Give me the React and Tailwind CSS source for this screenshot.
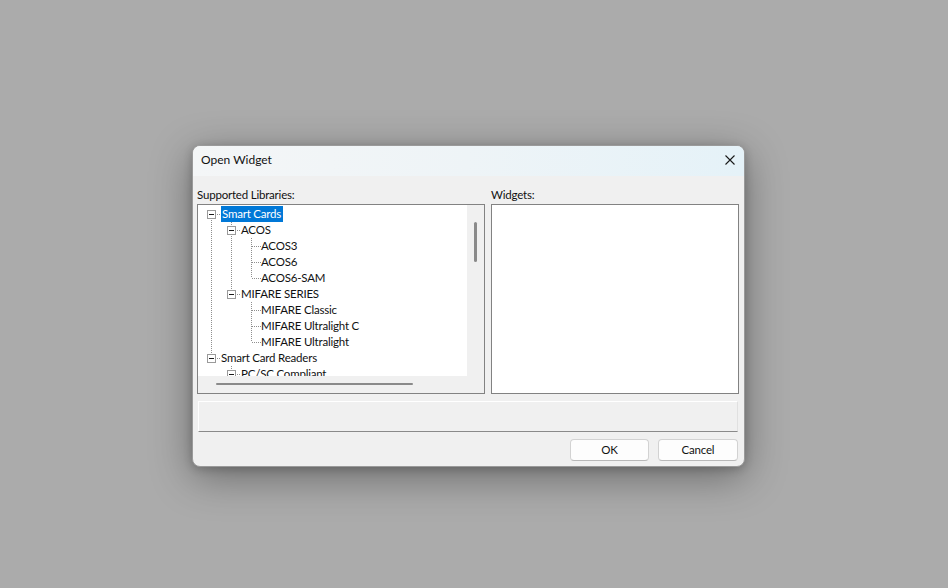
import React from "react";

const FONT = { fontFamily: 'Lato, "Noto Sans", sans-serif' };

function Cell({ type }) {
  const dot = { stroke: "#8f8f8f", strokeWidth: 1, strokeDasharray: "1 1", shapeRendering: "crispEdges" };
  if (type === "blank") return <div className="w-[20px] h-[16px] shrink-0" />;
  if (type === "guide")
    return (
      <svg width="20" height="16" className="shrink-0 block">
        <line x1="10.5" y1="0" x2="10.5" y2="16" style={dot} />
      </svg>
    );
  const { first, last, box } = type;
  return (
    <svg width="20" height="16" className="shrink-0 block">
      {!first && <line x1="10.5" y1="0" x2="10.5" y2={box ? 4 : 8} style={dot} />}
      {!last && <line x1="10.5" y1={box ? 14 : 8} x2="10.5" y2="16" style={dot} />}
      <line x1={box ? 16 : 11} y1="8.5" x2="20" y2="8.5" style={dot} />
      {box && (
        <g shapeRendering="crispEdges">
          <rect x="6.5" y="4.5" width="8" height="8" fill="#fff" stroke="#9a9a9a" />
          <line x1="8" y1="8.5" x2="13" y2="8.5" stroke="#1a1a1a" />
        </g>
      )}
    </svg>
  );
}

const rows = [
  { cells: [{ first: true, last: false, box: true }], label: "Smart Cards", selected: true },
  { cells: ["guide", { last: false, box: true }], label: "ACOS" },
  { cells: ["guide", "guide", { last: false }], label: "ACOS3" },
  { cells: ["guide", "guide", { last: false }], label: "ACOS6" },
  { cells: ["guide", "guide", { last: true }], label: "ACOS6-SAM" },
  { cells: ["guide", { last: true, box: true }], label: "MIFARE SERIES" },
  { cells: ["guide", "blank", { last: false }], label: "MIFARE Classic" },
  { cells: ["guide", "blank", { last: false }], label: "MIFARE Ultralight C" },
  { cells: ["guide", "blank", { last: true }], label: "MIFARE Ultralight" },
  { cells: [{ last: true, box: true }], label: "Smart Card Readers" },
  { cells: ["blank", { last: true, box: true }], label: "PC/SC Compliant" },
];

export default function App() {
  return (
    <div className="w-[948px] h-[588px] bg-[#ababab] pl-[192px] pt-[145px]" style={FONT}>
      <div className="w-[553px] h-[322px] rounded-[8px] overflow-hidden flex flex-col bg-[#f0f0f0] border border-[#9a9a9a] shadow-[0_10px_40px_rgba(0,0,0,0.38),0_2px_10px_rgba(0,0,0,0.2)] text-[11.5px] tracking-[-0.2px] text-[#111]">
        <div className="h-[30px] shrink-0 flex items-center justify-between pl-[8px] pr-[9px] bg-gradient-to-r from-[#f4f6f7] via-[#eef4f7] to-[#e5f2f8]">
          <span className="text-[12px] tracking-normal leading-none pb-[2px]">Open Widget</span>
          <svg width="10" height="10" viewBox="0 0 10 10" className="block mb-[3px]">
            <path d="M0.5 0.5 L9.5 9.5 M9.5 0.5 L0.5 9.5" stroke="#1a1a1a" strokeWidth="1.1" fill="none" />
          </svg>
        </div>
        <div className="flex-1 flex flex-col pl-[4px] pr-[5px] pt-[11px] pb-[5px]">
          <div className="flex gap-[6px]">
            <div className="w-[288px] flex flex-col">
              <div className="h-[17px] leading-[15px]">Supported Libraries:</div>
              <div className="h-[190px] border border-[#828282] bg-white grid grid-cols-[1fr_17px] grid-rows-[1fr_17px]">
                <div className="overflow-hidden pt-[1px] pl-[3px]">
                  {rows.map((r, i) => (
                    <div key={i} className="h-[16px] flex items-center">
                      {r.cells.map((c, j) => (
                        <Cell key={j} type={c} />
                      ))}
                      <span
                        className={
                          "h-[16px] leading-[16px] whitespace-nowrap " +
                          (r.selected ? "bg-[#0078d7] text-white px-[1px] pr-[2px]" : "")
                        }
                      >
                        {r.label}
                      </span>
                    </div>
                  ))}
                </div>
                <div className="bg-[#f0f0f0] pt-[17px] flex justify-center">
                  <div className="w-[3px] h-[40px] rounded-full bg-[#8a8a8a]" />
                </div>
                <div className="bg-[#f0f0f0] pt-[7px] pl-[18px]">
                  <div className="w-[197px] h-[2px] rounded-full bg-[#8a8a8a]" />
                </div>
                <div className="bg-[#f0f0f0]" />
              </div>
            </div>
            <div className="flex-1 flex flex-col">
              <div className="h-[17px] leading-[15px]">Widgets:</div>
              <div className="h-[190px] border border-[#828282] bg-white" />
            </div>
          </div>
          <div className="mt-[7px] ml-[1px] mr-[1px] h-[31px] border-t border-l border-t-white border-l-white border-b border-b-[#8a8a8a] border-r border-r-[#e0e0e0]" />
          <div className="mt-[7px] flex justify-end gap-[9px] pr-[1px]">
            <button className="w-[79px] h-[22px] rounded-[4px] bg-[#fdfdfd] border border-[#d2d2d2] border-b-[#b8b8b8] leading-none">
              OK
            </button>
            <button className="w-[80px] h-[22px] rounded-[4px] bg-[#fdfdfd] border border-[#d2d2d2] border-b-[#b8b8b8] leading-none">
              Cancel
            </button>
          </div>
        </div>
      </div>
    </div>
  );
}
